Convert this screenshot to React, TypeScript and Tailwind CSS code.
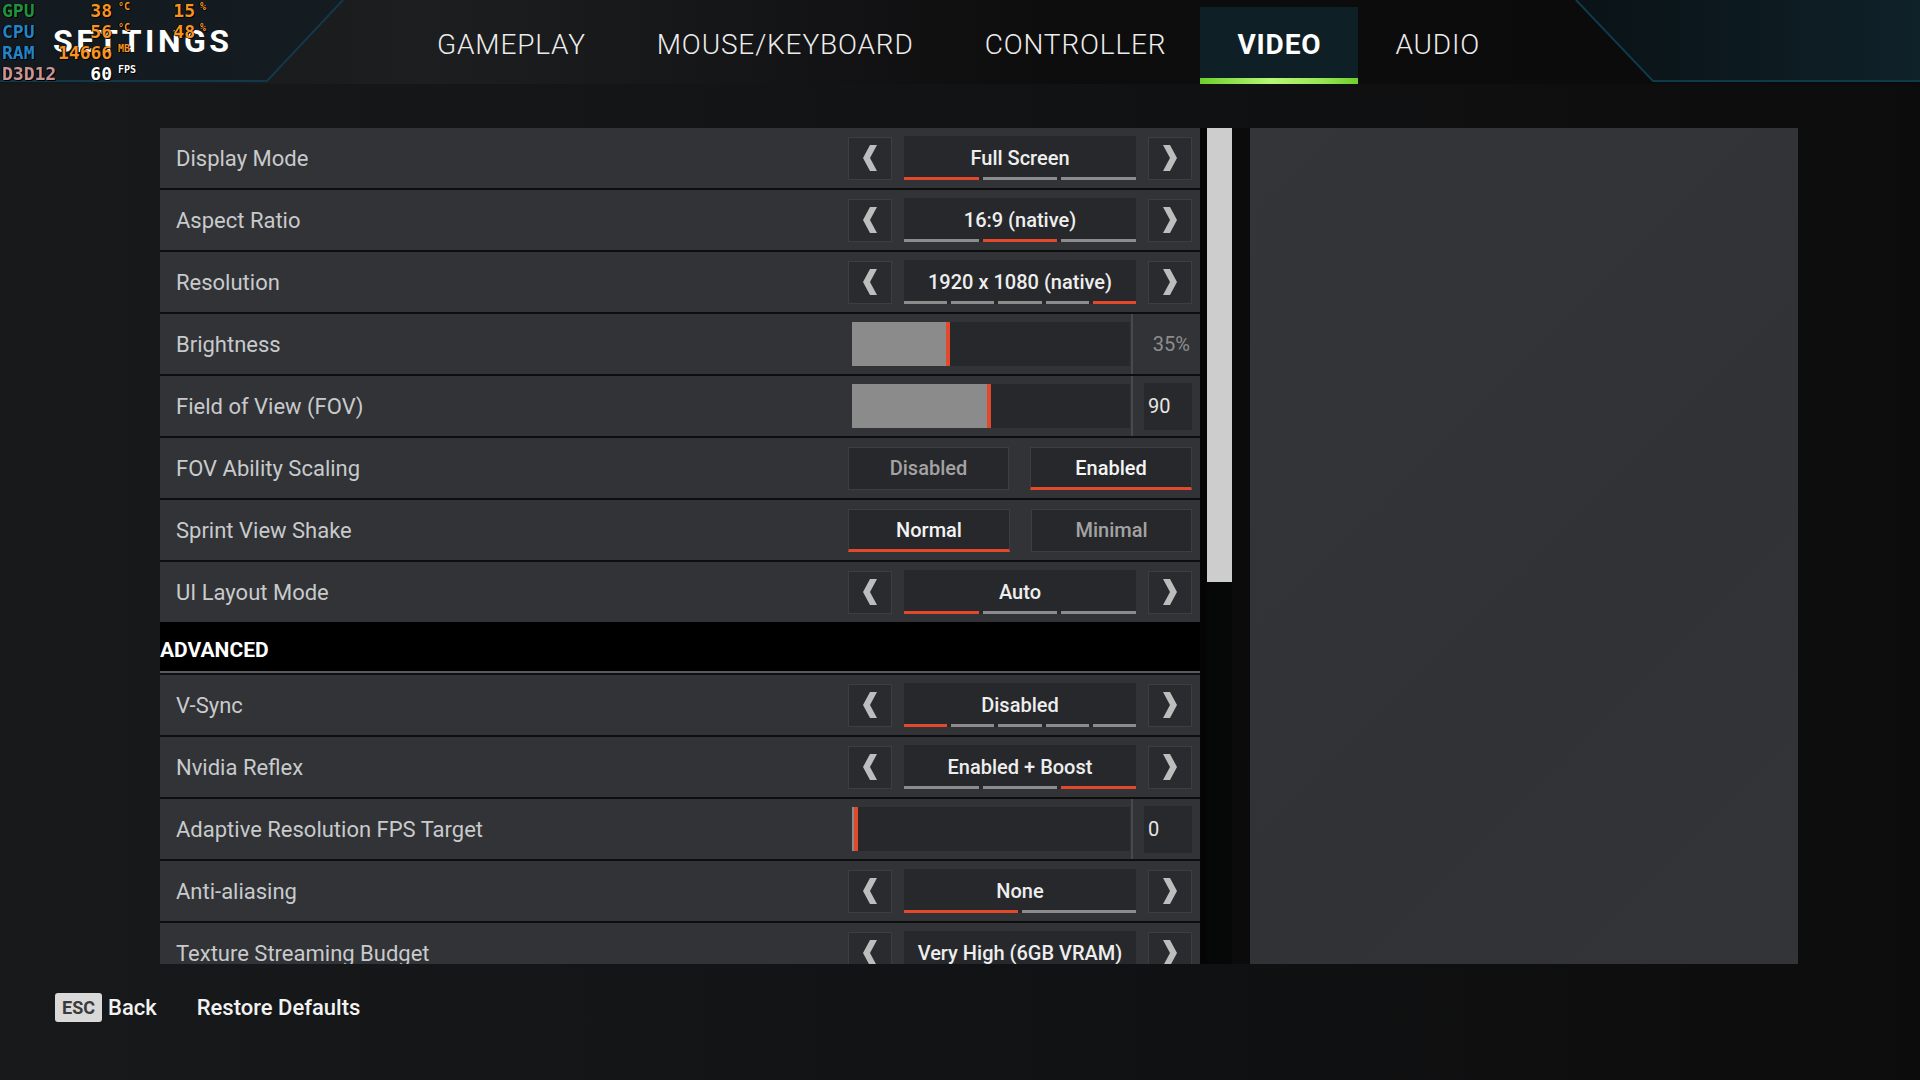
import React from "react";

type Item =
  | { label: string; type: "select"; value: string; segs: number; active: number }
  | { label: string; type: "slider"; fill: number; value: string; boxed: boolean }
  | { label: string; type: "toggle"; options: [string, string]; active: number };

const basic: Item[] = [
  { label: "Display Mode", type: "select", value: "Full Screen", segs: 3, active: 0 },
  { label: "Aspect Ratio", type: "select", value: "16:9 (native)", segs: 3, active: 1 },
  { label: "Resolution", type: "select", value: "1920 x 1080 (native)", segs: 5, active: 4 },
  { label: "Brightness", type: "slider", fill: 94, value: "35%", boxed: false },
  { label: "Field of View (FOV)", type: "slider", fill: 135, value: "90", boxed: true },
  { label: "FOV Ability Scaling", type: "toggle", options: ["Disabled", "Enabled"], active: 1 },
  { label: "Sprint View Shake", type: "toggle", options: ["Normal", "Minimal"], active: 0 },
  { label: "UI Layout Mode", type: "select", value: "Auto", segs: 3, active: 0 },
];

const advanced: Item[] = [
  { label: "V-Sync", type: "select", value: "Disabled", segs: 5, active: 0 },
  { label: "Nvidia Reflex", type: "select", value: "Enabled + Boost", segs: 3, active: 2 },
  { label: "Adaptive Resolution FPS Target", type: "slider", fill: 2, value: "0", boxed: true },
  { label: "Anti-aliasing", type: "select", value: "None", segs: 2, active: 0 },
  { label: "Texture Streaming Budget", type: "select", value: "Very High (6GB VRAM)", segs: 6, active: 4 },
];

function Chevron({ dir }: { dir: "left" | "right" }) {
  return (
    <svg width="14" height="26" viewBox="0 0 14 26">
      {dir === "left" ? (
        <polygon points="7,0 14,0 7,13 14,26 7,26 0,13" fill="#bdbdbd" />
      ) : (
        <polygon points="0,0 7,0 14,13 7,26 0,26 7,13" fill="#bdbdbd" />
      )}
    </svg>
  );
}

function ArrowBox({ dir }: { dir: "left" | "right" }) {
  return (
    <div className="w-[44px] h-[43px] border border-[#3c3e41] bg-[#2a2b2e] flex items-center justify-center">
      <Chevron dir={dir} />
    </div>
  );
}

function Control({ item }: { item: Item }) {
  if (item.type === "select") {
    return (
      <div className="flex items-center gap-[12px] pr-[8px]">
        <ArrowBox dir="left" />
        <div className="w-[232px] h-[44px] bg-[#27282b] flex flex-col">
          <div className="flex-1 flex items-center justify-center text-[20px] font-medium text-[#eeeeee] pt-[2px]">
            {item.value}
          </div>
          <div className="h-[3px] flex gap-[4px]">
            {Array.from({ length: item.segs }).map((_, i) => (
              <div key={i} className={i === item.active ? "flex-1 bg-[#e2482a]" : "flex-1 bg-[#8c8c8c]"} />
            ))}
          </div>
        </div>
        <ArrowBox dir="right" />
      </div>
    );
  }
  if (item.type === "slider") {
    return (
      <div className="flex items-center h-full">
        <div className="w-[278px] h-[44px] bg-[#27282b] flex">
          <div className="h-full bg-[#8b8b8b]" style={{ width: item.fill }} />
          <div className="w-[4px] h-full bg-[#e2482a]" />
        </div>
        <div className="w-[2px] h-full bg-[#47494c] ml-[1px]" />
        {item.boxed ? (
          <div className="w-[67px] h-full flex items-center pl-[11px] pr-[8px]">
            <div className="w-[48px] h-[47px] bg-[#28292c] flex items-center pl-[4px] text-[20px] text-[#e6e6e6]">
              {item.value}
            </div>
          </div>
        ) : (
          <div className="w-[67px] h-full flex items-center justify-end pr-[10px] text-[20px] text-[#8e8e8e]">
            {item.value}
          </div>
        )}
      </div>
    );
  }
  return (
    <div className="flex items-center gap-[21px] pr-[8px]">
      {item.options.map((o, i) => (
        <div
          key={o}
          className={
            i === item.active
              ? "w-[162px] h-[43px] bg-[#27282b] border border-[#3c3e41] border-b-[3px] border-b-[#e2482a] flex items-center justify-center pt-[2px] text-[20px] font-medium text-[#f4f4f4]"
              : "w-[161px] h-[43px] bg-[#27282b] border border-[#3c3e41] flex items-center justify-center text-[20px] font-medium text-[#a3a3a3]"
          }
        >
          {o}
        </div>
      ))}
    </div>
  );
}

function Row({ item }: { item: Item }) {
  return (
    <div className="h-[60px] shrink-0 bg-[#313336] flex items-center justify-between pl-[16px]">
      <span className="text-[22px] text-[#c8cacc]">{item.label}</span>
      <Control item={item} />
    </div>
  );
}

function Stat({
  label,
  labelColor,
  v1,
  u1,
  v2,
  u2,
  vColor = "#f7931e",
}: {
  label: string;
  labelColor: string;
  v1: string;
  u1: string;
  v2?: string;
  u2?: string;
  vColor?: string;
}) {
  return (
    <div className="h-[21px] flex items-center font-bold text-[18px] leading-[21px] [text-shadow:1px_1px_0_#000,-1px_0_0_#000]">
      <span className="w-[58px] pl-[2px]" style={{ color: labelColor }}>
        {label}
      </span>
      <span className="w-[54px] text-right" style={{ color: vColor }}>
        {v1}
      </span>
      <span className="w-[61px] pl-[6px] self-start text-[10px] leading-[14px]" style={{ color: vColor }}>
        {u1}
      </span>
      {v2 && (
        <>
          <span className="w-[22px] text-right text-[#f7931e]">{v2}</span>
          <span className="pl-[5px] self-start text-[10px] leading-[14px] text-[#f7931e]">{u2}</span>
        </>
      )}
    </div>
  );
}

export default function App() {
  return (
    <div className="w-[1920px] h-[1080px] relative overflow-hidden flex flex-col [font-family:Roboto,sans-serif] bg-[linear-gradient(90deg,#18191b_0%,#131415_40%,#0c0c0d_100%)] text-white">
      {/* Header */}
      <div className="h-[84px] shrink-0 relative bg-[linear-gradient(90deg,#141618_0%,#1d1e20_22%,#0d0d0e_55%,#0a0a0a_100%)]">
        <svg className="absolute inset-0" width="1920" height="84" viewBox="0 0 1920 84">
          <defs>
            <linearGradient id="lt" x1="0" x2="1" y1="0" y2="0">
              <stop offset="0" stopColor="#121a20" />
              <stop offset="1" stopColor="#151c21" />
            </linearGradient>
            <linearGradient id="rt" x1="0" x2="1" y1="0" y2="0">
              <stop offset="0" stopColor="#0a1216" />
              <stop offset="1" stopColor="#0f2129" />
            </linearGradient>
          </defs>
          <polygon points="0,0 343,0 267,81 0,81" fill="url(#lt)" />
          <polyline points="343,0 267,81 0,81" fill="none" stroke="#11394a" strokeWidth="2" />
          <polygon points="1576,0 1920,0 1920,81 1653,81" fill="url(#rt)" />
          <polyline points="1576,0 1653,81 1920,81" fill="none" stroke="#0f3a4b" strokeWidth="2" />
        </svg>
        <div className="relative h-full flex items-end">
          <div className="w-[400px] h-full flex items-center pl-[53px] pb-[2px]">
            <span className="text-[32px] font-bold tracking-[0.11em] text-white">SETTINGS</span>
          </div>
          <div className="flex items-end h-full">
            {["GAMEPLAY", "MOUSE/KEYBOARD", "CONTROLLER", "VIDEO", "AUDIO"].map((t) => {
              const active = t === "VIDEO";
              return (
                <div
                  key={t}
                  className={active ? "h-[77px] flex flex-col bg-[#0e2025]" : "h-[77px] flex flex-col"}
                >
                  <div
                    className={
                      active
                        ? "flex-1 flex items-center pl-[37px] pr-[37px] pt-[5px] text-[28px] font-bold tracking-[0.03em] text-white"
                        : "flex-1 flex items-center pl-[37px] pr-[34px] pt-[5px] text-[28px] font-light tracking-[0.03em] text-[#ececec]"
                    }
                  >
                    {t}
                  </div>
                  <div
                    className={
                      active
                        ? "h-[6px] bg-[linear-gradient(90deg,#6fcf2b_0%,#b6f777_45%,#9be857_75%,#6fcf2b_100%)]"
                        : "h-[6px]"
                    }
                  />
                </div>
              );
            })}
          </div>
        </div>
      </div>

      {/* OSD overlay */}
      <div className="absolute top-0 left-0 [font-family:'DejaVu_Sans_Mono',monospace]">
        <Stat label="GPU" labelColor="#22923e" v1="38" u1="°C" v2="15" u2="%" />
        <Stat label="CPU" labelColor="#2584c6" v1="56" u1="°C" v2="48" u2="%" />
        <Stat label="RAM" labelColor="#2584c6" v1="14666" u1="MB" />
        <Stat label="D3D12" labelColor="#c99595" v1="60" u1="FPS" vColor="#ffffff" />
      </div>

      {/* Main */}
      <div className="mt-[44px] h-[836px] shrink-0 flex pl-[160px]">
        <div className="w-[1040px] h-full overflow-hidden flex flex-col bg-[#0e0e0f]">
          <div className="flex flex-col gap-[2px]">
            {basic.map((it) => (
              <Row key={it.label} item={it} />
            ))}
          </div>
          <div className="h-[49px] shrink-0 bg-black flex items-center pt-[8px]">
            <span className="text-[21px] font-bold text-white">ADVANCED</span>
          </div>
          <div className="h-[2px] shrink-0 bg-[#5a5b5c]" />
          <div className="flex flex-col gap-[2px] mt-[2px]">
            {advanced.map((it) => (
              <Row key={it.label} item={it} />
            ))}
          </div>
        </div>
        <div className="w-[7px] h-full bg-[#050505]" />
        <div className="w-[25px] h-full bg-[#060707]">
          <div className="h-[454px] bg-[#cdcdcd]" />
        </div>
        <div className="w-[18px] h-full bg-[#0b0b0c]" />
        <div className="w-[548px] h-full bg-[linear-gradient(135deg,#333538_0%,#303235_60%,#323437_100%)]" />
      </div>

      {/* Footer */}
      <div className="mt-[29px] h-[29px] shrink-0 flex items-center pl-[55px]">
        <div className="w-[47px] h-[29px] rounded-[3px] bg-[#d9d9d9] flex items-center justify-center text-[18px] font-bold text-[#3a3a3a]">
          ESC
        </div>
        <span className="ml-[6px] text-[22px] font-medium text-[#f2f2f2]">Back</span>
        <span className="ml-[40px] text-[22px] font-medium text-[#f2f2f2]">Restore Defaults</span>
      </div>
    </div>
  );
}
